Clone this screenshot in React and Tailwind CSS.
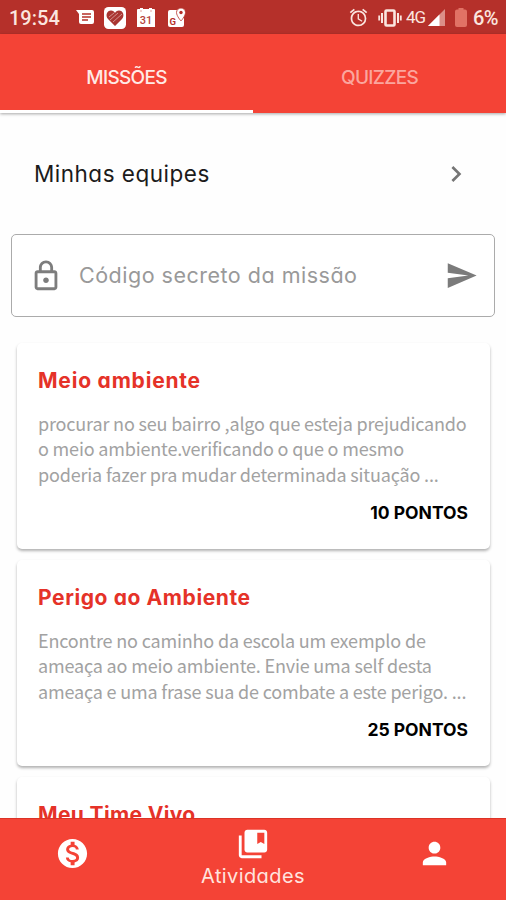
import React, { useState } from "react";
import {
  MdAlarm,
  MdChevronRight,
  MdCollectionsBookmark,
  MdMonetizationOn,
  MdOutlineLock,
  MdPerson,
  MdSend,
} from "react-icons/md";

const missions = [
  {
    title: "Meio ambiente",
    titleClass: "tracking-[0.8px]",
    lines: [
      "procurar no seu bairro ,algo que esteja prejudicando",
      "o meio ambiente.verificando o que o mesmo",
      "poderia fazer pra mudar determinada situação ...",
    ],
    points: "10 PONTOS",
  },
  {
    title: "Perigo ao Ambiente",
    titleClass: "tracking-[0.6px]",
    lines: [
      "Encontre no caminho da escola um exemplo de",
      "ameaça ao meio ambiente. Envie uma self desta",
      "ameaça e uma frase sua de combate a este perigo. ...",
    ],
    points: "25 PONTOS",
  },
  {
    title: "Meu Time Vivo",
    titleClass: "tracking-[0.35px]",
    lines: [],
    points: "",
  },
];

const StatusBar = () => (
  <div className="flex h-[34px] shrink-0 items-center bg-[#b5302a] pt-px pl-[9px] pr-2 font-[Roboto,sans-serif] text-[#fbe5df]">
    <span className="w-[67px] text-[20px] font-medium leading-none">19:54</span>
    <svg className="h-[18px] w-[18px]" viewBox="0 0 18 18">
      <path d="M0 1h16a2 2 0 0 1 2 2v10a2 2 0 0 1-2 2H5a2 2 0 0 1-2-2V5z" fill="#fff" />
      <path d="M6 5h9M6 8h9M6 11h6" stroke="#b5302a" strokeWidth="1.5" />
    </svg>
    <svg className="ml-[10px] h-[22px] w-[22px]" viewBox="0 0 22 22">
      <rect width="22" height="22" rx="4.5" fill="#fff" />
      <path
        d="M11 19 4 12C1 8.5 3 3.5 7 3.5c2 0 3.3 1 4 2.5.7-1.5 2-2.5 4-2.5 4 0 6 5 3 8.5z"
        fill="#a93632"
      />
      <path d="m5 10 5-4M6 13l8-7M9 15l9-8" stroke="#d99a96" strokeWidth="0.9" />
    </svg>
    <svg className="ml-[10px] h-[20px] w-[20px]" viewBox="0 0 20 20">
      <path d="M2 1h2V0h3v1h6V0h3v1h2a1 1 0 0 1 1 1v4H1V2a1 1 0 0 1 1-1z" fill="#fff" />
      <path d="M1 6h18v13H1z" fill="#fff" />
      <path d="M5 2v2M15 2v2" stroke="#d98a85" strokeWidth="0.8" />
      <text x="10" y="15.8" textAnchor="middle" fontSize="11" fontWeight="500" fill="#b5443e">
        31
      </text>
    </svg>
    <svg className="ml-[11px] h-[20px] w-[20px]" viewBox="0 0 20 20">
      <path d="M3 2h8l6 8v7a2 2 0 0 1-2 2H3a2 2 0 0 1-2-2V4a2 2 0 0 1 2-2z" fill="#fff" />
      <path
        d="M14 0a4.5 4.5 0 0 1 4.5 4.5C18.5 8 14 13 14 13S9.5 8 9.5 4.5A4.5 4.5 0 0 1 14 0z"
        fill="#fff"
        stroke="#b5302a"
        strokeWidth="0.8"
      />
      <circle cx="14" cy="4.5" r="1.7" fill="#b5302a" />
      <text x="2.5" y="16.5" fontSize="9.5" fontWeight="700" fill="#b5302a">
        G
      </text>
    </svg>

    <MdAlarm className="ml-auto h-[21px] w-[21px]" />
    <svg className="ml-[9px] h-[18px] w-[24px]" viewBox="0 0 24 18" fill="none" stroke="currentColor">
      <rect x="7.5" y="1.5" width="9" height="15" rx="1" strokeWidth="2.6" />
      <path d="M4 4v10M20 4v10" strokeWidth="2" />
      <path d="M1.2 6.5v5M22.8 6.5v5" strokeWidth="1.8" />
    </svg>
    <span className="ml-[4px] inline-block w-[20px] text-[17px] leading-none tracking-[-1.2px]">
      4G
    </span>
    <svg className="ml-[2px] h-[17px] w-[17px]" viewBox="0 0 17 17">
      <path d="M17 0v17H0z" fill="#dc8f88" />
      <path d="M11.5 5.5V17H0z" fill="#fff" />
    </svg>
    <svg className="ml-[10px] h-[19px] w-[12px]" viewBox="0 0 12 19">
      <path
        d="M3.5 0h5v1.5h1.5a2 2 0 0 1 2 2V17a2 2 0 0 1-2 2H2a2 2 0 0 1-2-2V3.5a2 2 0 0 1 2-2h1.5z"
        fill="#e17265"
      />
    </svg>
    <span className="ml-[6px] text-[20px] font-medium leading-none tracking-[-0.6px]">6%</span>
  </div>
);

const Tabs = ({ active, onChange }) => (
  <div className="relative z-10 flex h-[79px] shrink-0 bg-[#f44336] text-[19px] font-medium shadow-[0_1px_3px_rgba(0,0,0,0.35)]">
    <button
      onClick={() => onChange("missoes")}
      className={`w-1/2 border-b-3 pt-[12px] tracking-[-0.7px] ${
        active === "missoes" ? "border-white text-[#ffeae6]" : "border-transparent text-[#fba69e]"
      }`}
    >
      MISSÕES
    </button>
    <button
      onClick={() => onChange("quizzes")}
      className={`w-1/2 border-b-3 pt-[12px] tracking-[-0.7px] ${
        active === "quizzes" ? "border-white text-[#ffeae6]" : "border-transparent text-[#fba69e]"
      }`}
    >
      QUIZZES
    </button>
  </div>
);

const MissionCard = ({ mission }) => (
  <div className="h-[206px] shrink-0 rounded-[5px] bg-white px-[21px] pt-[23px] shadow-[0_2px_3px_rgba(0,0,0,0.3)]">
    <h2 className={`text-[21px] font-bold leading-[30px] text-[#e53228] ${mission.titleClass}`}>
      {mission.title}
    </h2>
    <div className="mt-[15px] whitespace-nowrap font-['Noto_Sans_CJK_SC',sans-serif] text-[18px] leading-[25.4px] tracking-[-0.17px] text-[#a2a2a2]">
      {mission.lines.map((line) => (
        <p key={line}>{line}</p>
      ))}
    </div>
    <p className="mt-[13px] pr-px text-right text-[17.5px] font-bold leading-[26px] text-black">
      {mission.points}
    </p>
  </div>
);

const BottomNav = () => (
  <nav className="flex h-[82px] shrink-0 border-t border-[#dc3326] bg-[#f44336] text-white">
    <button className="flex w-[145px] justify-center pt-[17px]">
      <MdMonetizationOn className="h-[35px] w-[35px]" />
    </button>
    <button className="flex w-[216px] flex-col items-center pt-[8px]">
      <MdCollectionsBookmark className="h-[34px] w-[34px]" />
      <span className="text-[20px] leading-[30px] tracking-[0.4px] text-[#ffe4df]">
        Atividades
      </span>
    </button>
    <button className="flex w-[145px] justify-center pt-[17px] pl-px">
      <MdPerson className="h-[35px] w-[35px]" />
    </button>
  </nav>
);

const App = () => {
  const [tab, setTab] = useState("missoes");
  const [code, setCode] = useState("");

  return (
    <div className="flex h-screen w-full flex-col overflow-hidden bg-[#fefefe] font-[Inter,sans-serif] [font-feature-settings:'cv11']">
      <StatusBar />
      <Tabs active={tab} onChange={setTab} />

      <main className="flex min-h-0 flex-1 flex-col overflow-hidden">
        {/* my teams */}
        <button className="flex h-[121px] shrink-0 items-center justify-between pl-[34px] pr-[34px] text-left">
          <span className="text-[22.5px] tracking-[0.5px] text-[#1b1b1b]">Minhas equipes</span>
          <MdChevronRight className="h-[32px] w-[32px] text-[#757575]" />
        </button>

        {/* secret code */}
        <div className="mx-[11px] flex h-[83px] shrink-0 items-center rounded-[5px] border-[1.5px] border-[#ababab] bg-white pl-[17px] pr-[16px]">
          <MdOutlineLock className="h-[34px] w-[34px] shrink-0 text-[#7d7d7d]" />
          <input
            value={code}
            onChange={(e) => setCode(e.target.value)}
            placeholder="Código secreto da missão"
            className="ml-[16px] min-w-0 flex-1 text-[21.5px] tracking-[0.5px] outline-none placeholder:text-[#999999]"
          />
          <MdSend className="h-[33px] w-[33px] shrink-0 text-[#7b7b7b]" />
        </div>

        {/* missions */}
        <div className="mt-[26px] flex flex-col gap-[11px] pl-[17px] pr-[16px]">
          {missions.map((mission) => (
            <MissionCard key={mission.title} mission={mission} />
          ))}
        </div>
      </main>

      <BottomNav />
    </div>
  );
};

export default App;
